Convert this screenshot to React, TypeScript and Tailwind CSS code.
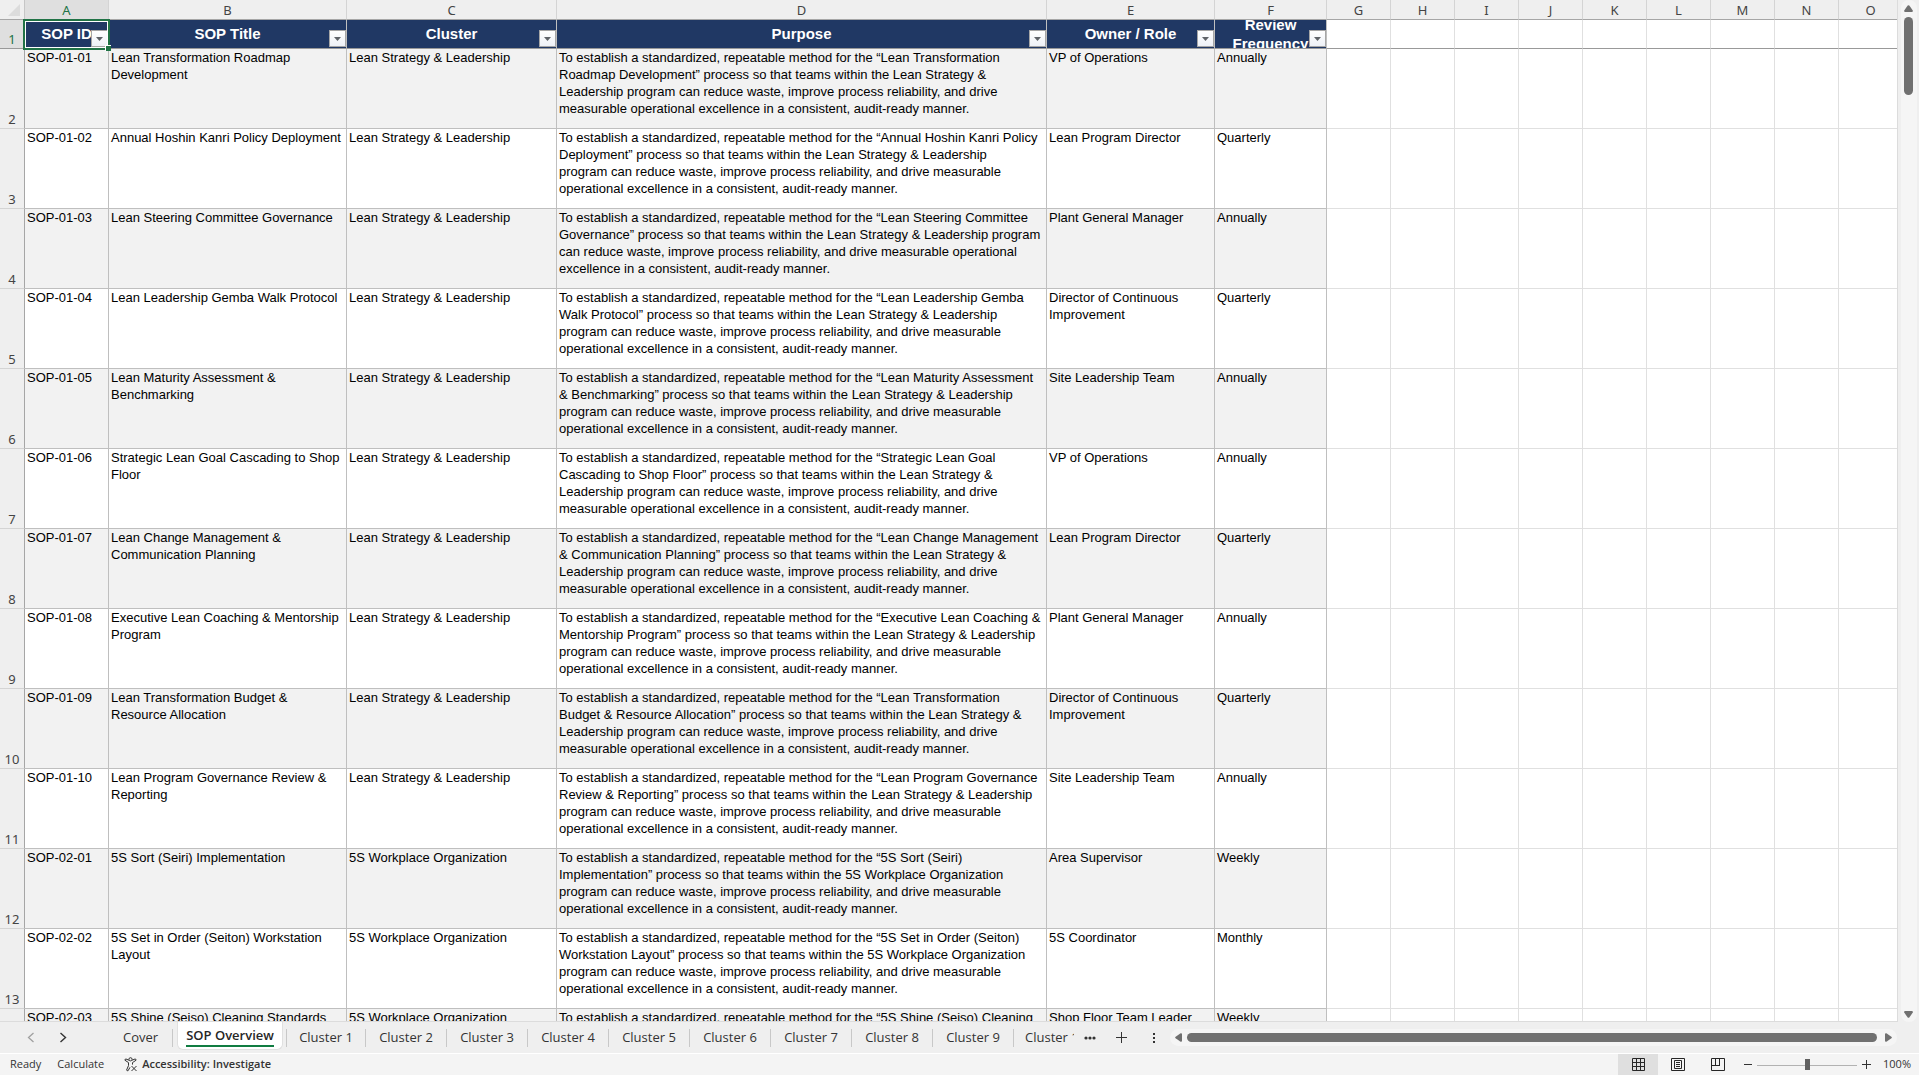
import React from "react";

type Row = { id: string; title: string; cluster: string; purpose: string; owner: string; freq: string };

const LS = "Lean Strategy & Leadership";
const WO = "5S Workplace Organization";
const START = "To establish a standardized, repeatable method for the ";

const rows: Row[] = [
  { id: "SOP-01-01", title: "Lean Transformation Roadmap\nDevelopment", cluster: LS, owner: "VP of Operations", freq: "Annually",
    purpose: START + "“Lean Transformation\nRoadmap Development” process so that teams within the Lean Strategy &\nLeadership program can reduce waste, improve process reliability, and drive\nmeasurable operational excellence in a consistent, audit-ready manner." },
  { id: "SOP-01-02", title: "Annual Hoshin Kanri Policy Deployment", cluster: LS, owner: "Lean Program Director", freq: "Quarterly",
    purpose: START + "“Annual Hoshin Kanri Policy\nDeployment” process so that teams within the Lean Strategy & Leadership\nprogram can reduce waste, improve process reliability, and drive measurable\noperational excellence in a consistent, audit-ready manner." },
  { id: "SOP-01-03", title: "Lean Steering Committee Governance", cluster: LS, owner: "Plant General Manager", freq: "Annually",
    purpose: START + "“Lean Steering Committee\nGovernance” process so that teams within the Lean Strategy & Leadership program\ncan reduce waste, improve process reliability, and drive measurable operational\nexcellence in a consistent, audit-ready manner." },
  { id: "SOP-01-04", title: "Lean Leadership Gemba Walk Protocol", cluster: LS, owner: "Director of Continuous\nImprovement", freq: "Quarterly",
    purpose: START + "“Lean Leadership Gemba\nWalk Protocol” process so that teams within the Lean Strategy & Leadership\nprogram can reduce waste, improve process reliability, and drive measurable\noperational excellence in a consistent, audit-ready manner." },
  { id: "SOP-01-05", title: "Lean Maturity Assessment &\nBenchmarking", cluster: LS, owner: "Site Leadership Team", freq: "Annually",
    purpose: START + "“Lean Maturity Assessment\n& Benchmarking” process so that teams within the Lean Strategy & Leadership\nprogram can reduce waste, improve process reliability, and drive measurable\noperational excellence in a consistent, audit-ready manner." },
  { id: "SOP-01-06", title: "Strategic Lean Goal Cascading to Shop\nFloor", cluster: LS, owner: "VP of Operations", freq: "Annually",
    purpose: START + "“Strategic Lean Goal\nCascading to Shop Floor” process so that teams within the Lean Strategy &\nLeadership program can reduce waste, improve process reliability, and drive\nmeasurable operational excellence in a consistent, audit-ready manner." },
  { id: "SOP-01-07", title: "Lean Change Management &\nCommunication Planning", cluster: LS, owner: "Lean Program Director", freq: "Quarterly",
    purpose: START + "“Lean Change Management\n& Communication Planning” process so that teams within the Lean Strategy &\nLeadership program can reduce waste, improve process reliability, and drive\nmeasurable operational excellence in a consistent, audit-ready manner." },
  { id: "SOP-01-08", title: "Executive Lean Coaching & Mentorship\nProgram", cluster: LS, owner: "Plant General Manager", freq: "Annually",
    purpose: START + "“Executive Lean Coaching &\nMentorship Program” process so that teams within the Lean Strategy & Leadership\nprogram can reduce waste, improve process reliability, and drive measurable\noperational excellence in a consistent, audit-ready manner." },
  { id: "SOP-01-09", title: "Lean Transformation Budget &\nResource Allocation", cluster: LS, owner: "Director of Continuous\nImprovement", freq: "Quarterly",
    purpose: START + "“Lean Transformation\nBudget & Resource Allocation” process so that teams within the Lean Strategy &\nLeadership program can reduce waste, improve process reliability, and drive\nmeasurable operational excellence in a consistent, audit-ready manner." },
  { id: "SOP-01-10", title: "Lean Program Governance Review &\nReporting", cluster: LS, owner: "Site Leadership Team", freq: "Annually",
    purpose: START + "“Lean Program Governance\nReview & Reporting” process so that teams within the Lean Strategy & Leadership\nprogram can reduce waste, improve process reliability, and drive measurable\noperational excellence in a consistent, audit-ready manner." },
  { id: "SOP-02-01", title: "5S Sort (Seiri) Implementation", cluster: WO, owner: "Area Supervisor", freq: "Weekly",
    purpose: START + "“5S Sort (Seiri)\nImplementation” process so that teams within the 5S Workplace Organization\nprogram can reduce waste, improve process reliability, and drive measurable\noperational excellence in a consistent, audit-ready manner." },
  { id: "SOP-02-02", title: "5S Set in Order (Seiton) Workstation\nLayout", cluster: WO, owner: "5S Coordinator", freq: "Monthly",
    purpose: START + "“5S Set in Order (Seiton)\nWorkstation Layout” process so that teams within the 5S Workplace Organization\nprogram can reduce waste, improve process reliability, and drive measurable\noperational excellence in a consistent, audit-ready manner." },
  { id: "SOP-02-03", title: "5S Shine (Seiso) Cleaning Standards", cluster: WO, owner: "Shop Floor Team Leader", freq: "Weekly",
    purpose: START + "“5S Shine (Seiso) Cleaning" },
];

const letters = "ABCDEFGHIJKLMNO".split("");
const emptyLetters = letters.slice(6);
const headers = ["SOP ID", "SOP Title", "Cluster", "Purpose", "Owner / Role", "Review Frequency"];
const clusterTabs = [1, 2, 3, 4, 5, 6, 7, 8, 9];

function FilterButton({ label }: { label: string }) {
  return (
    <button
      aria-label={`Filter ${label}`}
      className="absolute right-0 bottom-px flex h-[17px] w-[17px] items-center justify-center border border-[#a6a6a6] bg-linear-to-b from-white to-[#eef1f7]"
    >
      <svg width="7" height="4" viewBox="0 0 7 4" className="mt-px">
        <path d="M0 0h7L3.5 4z" fill="#5f6368" />
      </svg>
    </button>
  );
}

function Sheet() {
  return (
    <div className="min-h-0 min-w-0 flex-1 overflow-hidden border-r border-b border-[#dcdcdc] bg-white">
      <table className="w-full table-fixed border-separate border-spacing-0">
        <colgroup>
          <col className="w-[25px]" />
          <col className="w-[84px]" />
          <col className="w-[238px]" />
          <col className="w-[210px]" />
          <col className="w-[490px]" />
          <col className="w-[168px]" />
          <col className="w-[112px]" />
          {emptyLetters.slice(0, -1).map((l) => (
            <col key={l} className="w-[64px]" />
          ))}
          <col />
        </colgroup>
        <thead>
          <tr className="h-5 bg-[#efefef] font-['Noto_Sans'] text-[13px] leading-[18px] text-[#444]">
            <th className="border-r border-b border-[#a6a6a6] border-r-[#c6c6c6] p-0">
              <button aria-label="Select all" className="flex h-[19px] w-full items-end justify-end pr-1 pb-[3px]">
                <svg width="12" height="12" viewBox="0 0 12 12">
                  <path d="M12 0v12H0z" fill="#dcdcdc" />
                </svg>
              </button>
            </th>
            {letters.map((l, i) => (
              <th
                key={l}
                scope="col"
                className={
                  "border-b border-b-[#a6a6a6] p-0 font-normal " +
                  (i === 0 ? "bg-[#dfdfdf] text-[#217346] " : "") +
                  (i < 14 ? "border-r border-r-[#d4d4d4]" : "pl-[5px]")
                }
              >
                {l}
              </th>
            ))}
          </tr>
        </thead>
        <tbody>
          <tr className="h-[29px] font-['Liberation_Sans'] text-[15px] leading-[19px] font-bold text-white">
            <th scope="row" className="border-r border-b border-r-[#a6a6a6] border-b-[#999] bg-[#dfdfdf] p-0 align-bottom font-['Noto_Sans'] text-[13px] leading-[18px] font-normal text-[#217346]">
              1
            </th>
            {headers.map((h, i) => (
              <th
                key={h}
                scope="col"
                className="relative border-r border-b border-r-[#bfbfbf] border-b-[#999] bg-[#203864] p-0"
              >
                <div
                  className={
                    "flex h-7 items-center justify-center overflow-hidden px-2 text-center " + (i < 5 ? "pb-0.5" : "")
                  }
                >
                  {h}
                </div>
                <FilterButton label={h} />
                {i === 0 && (
                  <div className="pointer-events-none absolute -top-px -right-[2px] -bottom-[2px] -left-[2px] z-10 border-2 border-[#217346]">
                    <div className="h-full border border-white" />
                    <div className="absolute -right-[3px] -bottom-[3px] h-[6px] w-[6px] border-t border-l border-white bg-[#217346]" />
                  </div>
                )}
              </th>
            ))}
            {emptyLetters.map((l, i) => (
              <td key={l} className={"border-b border-b-[#999] p-0 " + (i < 8 ? "border-r border-r-[#e0e0e0]" : "")} />
            ))}
          </tr>
          {rows.map((r, n) => (
            <tr key={r.id} className="h-20 align-top font-['Liberation_Sans'] text-[13px] leading-[17px] text-black">
              <th scope="row" className="border-r border-b border-r-[#a6a6a6] border-b-[#d4d4d4] bg-[#efefef] p-0 align-bottom font-['Noto_Sans'] text-[13px] leading-[18px] font-normal text-[#444]">
                {n < 12 ? n + 2 : null}
              </th>
              {[r.id, r.title, r.cluster, r.purpose, r.owner, r.freq].map((c, i) => (
                <td
                  key={i}
                  className={
                    "overflow-hidden border-r border-b border-[#bfbfbf] p-0 pl-0.5 whitespace-pre " +
                    (n % 2 === 0 ? "bg-[#f2f2f2]" : "bg-white")
                  }
                >
                  {c}
                </td>
              ))}
              {emptyLetters.map((l, i) => (
                <td key={l} className={"border-b border-[#e0e0e0] p-0 " + (i < 8 ? "border-r" : "")} />
              ))}
            </tr>
          ))}
        </tbody>
      </table>
    </div>
  );
}

function VerticalScrollbar() {
  return (
    <div className="flex w-[21px] shrink-0 justify-center bg-[#efefef]">
      <div className="flex w-4 flex-col items-center rounded-lg bg-[#f5f5f5] pt-[5px] pb-1">
        <button aria-label="Scroll up">
          <svg width="9" height="7" viewBox="0 0 9 7" className="block">
            <path d="M3.7.6Q4.5-.3 5.3.6L8.8 5.6Q9 7 8 7H1Q0 7 .2 5.6z" fill="#707070" />
          </svg>
        </button>
        <div className="mt-[5px] h-[78px] w-[9px] rounded-full bg-[#707070]" />
        <button aria-label="Scroll down" className="mt-auto">
          <svg width="9" height="7" viewBox="0 0 9 7" className="block">
            <path d="M3.7 6.4Q4.5 7.3 5.3 6.4L8.8 1.4Q9 0 8 0H1Q0 0 .2 1.4z" fill="#707070" />
          </svg>
        </button>
      </div>
    </div>
  );
}

function TabStrip() {
  return (
    <div className="flex h-[31px] shrink-0 items-center bg-[#efefef] pr-[22px] font-['Open_Sans'] text-[13px] text-[#333]">
      <button aria-label="Previous sheet" className="ml-[27px]">
        <svg width="8" height="11" viewBox="0 0 8 11" fill="none" stroke="#a0a0a0" strokeWidth="1.3">
          <path d="M6.5 1L1.5 5.5l5 4.5" />
        </svg>
      </button>
      <button aria-label="Next sheet" className="ml-[24px]">
        <svg width="8" height="11" viewBox="0 0 8 11" fill="none" stroke="#333" strokeWidth="1.4">
          <path d="M1.5 1l5 4.5-5 4.5" />
        </svg>
      </button>
      <button className="ml-[42px] h-[18px] w-[64px] shrink-0 border-r border-[#c8c8c8] leading-[17px]">Cover</button>
      <button className="ml-1 flex h-7 w-[106px] shrink-0 justify-center self-start rounded-b-md border border-t-0 border-[#e0e0e0] bg-white font-semibold text-[#262626]">
        <span className="h-[25px] border-b-2 border-[#107c41] leading-[26px]">SOP Overview</span>
      </button>
      <div className="ml-[3px] h-[18px] shrink-0 border-r border-[#c8c8c8]" />
      {clusterTabs.map((n) => (
        <button
          key={n}
          className={
            "h-[18px] shrink-0 border-r border-[#c8c8c8] leading-[17px] " + (n === 1 ? "w-[79px]" : "w-[81px]")
          }
        >
          {`Cluster ${n}`}
        </button>
      ))}
      <button className="ml-[11px] h-[18px] w-[49px] shrink-0 overflow-hidden text-left leading-[17px] whitespace-nowrap">
        Cluster 10
      </button>
      <button aria-label="More sheets" className="ml-[10px] shrink-0">
        <svg width="12" height="4" viewBox="0 0 12 4" fill="#333">
          <circle cx="2" cy="2" r="1.6" />
          <circle cx="6" cy="2" r="1.6" />
          <circle cx="10" cy="2" r="1.6" />
        </svg>
      </button>
      <button aria-label="New sheet" className="ml-5 shrink-0">
        <svg width="12" height="12" viewBox="0 0 12 12" stroke="#333">
          <path d="M0 5.5h11M5.5 0v11" />
        </svg>
      </button>
      <div className="ml-6 shrink-0">
        <svg width="4" height="12" viewBox="0 0 4 12" fill="#333">
          <path d="M1 1h2v2H1zM1 5h2v2H1zM1 9h2v2H1z" />
        </svg>
      </div>
      <div className="ml-[14px] flex h-[17px] min-w-0 flex-1 items-center rounded-full bg-[#f5f5f5] px-[5px]">
        <button aria-label="Scroll left">
          <svg width="7" height="9" viewBox="0 0 7 9" className="block">
            <path d="M.6 3.7Q-.3 4.5.6 5.3L5.6 8.8Q7 9 7 8V1Q7 0 5.6.2z" fill="#707070" />
          </svg>
        </button>
        <div className="mr-2 ml-[5px] h-[9px] flex-1 rounded-full bg-[#707070]" />
        <button aria-label="Scroll right">
          <svg width="7" height="9" viewBox="0 0 7 9" className="block">
            <path d="M6.4 3.7Q7.3 4.5 6.4 5.3L1.4 8.8Q0 9 0 8V1Q0 0 1.4.2z" fill="#707070" />
          </svg>
        </button>
      </div>
    </div>
  );
}

function StatusBar() {
  return (
    <div className="flex h-[22px] shrink-0 items-center border-t border-white bg-[#f4f4f4] pr-2 pl-[10px] font-['Open_Sans'] text-[11px] text-[#333]">
      <span>Ready</span>
      <span className="ml-4">Calculate</span>
      <button className="ml-5 flex items-center gap-1 font-semibold">
        <svg width="14" height="15" viewBox="0 0 14 15" fill="none" stroke="#333">
          <circle cx="6.5" cy="2.3" r="1.6" />
          <path d="M4.9 3.2L2 2Q.8 2 .9 3.2L4.5 5.6v3L2.6 13q.4 1.2 1.5.7L6 10.3M8.1 3.2L11 2Q12.2 2 12.1 3.2L8.5 5.6v2M7.500 9l5 5M12.500 9l-5 5" />
        </svg>
        Accessibility: Investigate
      </button>
      <button aria-label="Normal view" className="ml-auto flex h-[21px] w-10 items-center justify-center bg-[#dfdfdf]">
        <svg width="13" height="13" viewBox="0 0 13 13" fill="none" stroke="#262626">
          <path d="M.5.5h12v12H.5zM4.5 0v13M8.5 0v13M0 4.5h13M0 8.5h13" />
        </svg>
      </button>
      <button aria-label="Page layout" className="flex h-[21px] w-10 items-center justify-center">
        <svg width="14" height="13" viewBox="0 0 14 13" fill="none" stroke="#262626">
          <path d="M.5.5h13v12H.5zM3.5 2.5h7v8h-7zM5 4.5h4M5 6.5h4M5 8.5h4" />
        </svg>
      </button>
      <button aria-label="Page break preview" className="flex h-[21px] w-10 items-center justify-center">
        <svg width="14" height="13" viewBox="0 0 14 13" fill="none" stroke="#262626">
          <path d="M.5.5h13v12H.5zM4.5 0v7.500M8.500 0v8M0 7.500H9" />
        </svg>
      </button>
      <button aria-label="Zoom out" className="ml-[6px]">
        <svg width="8" height="9" viewBox="0 0 8 9" stroke="#333">
          <path d="M0 4.5h8" />
        </svg>
      </button>
      <input
        type="range"
        aria-label="Zoom"
        min={10}
        max={190}
        defaultValue={100}
        className="mx-[5px] h-3 w-[100px] appearance-none bg-linear-to-b from-transparent from-[6px] via-[#707070] via-[6px] to-transparent to-[7px] [&::-webkit-slider-thumb]:h-[11px] [&::-webkit-slider-thumb]:w-[5px] [&::-webkit-slider-thumb]:appearance-none [&::-webkit-slider-thumb]:bg-[#606060]"
      />
      <button aria-label="Zoom in">
        <svg width="9" height="9" viewBox="0 0 9 9" stroke="#333">
          <path d="M0 4.5h9M4.5 0v9" />
        </svg>
      </button>
      <button className="ml-3 w-7 text-right text-[11px]">100%</button>
    </div>
  );
}

export default function App() {
  return (
    <div className="flex h-screen flex-col overflow-hidden bg-[#efefef]">
      <div className="flex min-h-0 flex-1">
        <Sheet />
        <VerticalScrollbar />
      </div>
      <TabStrip />
      <StatusBar />
    </div>
  );
}
